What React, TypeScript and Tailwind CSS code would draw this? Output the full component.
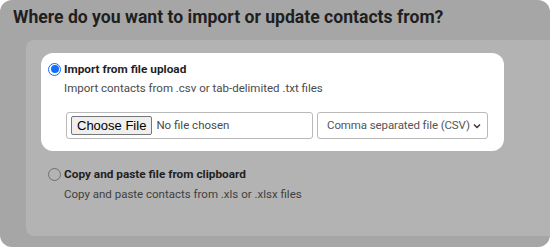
import React, { useState } from 'react';

const Radio = ({ checked }: { checked: boolean }) => (
    <span
        className={
            checked
                ? 'flex h-[13px] w-[13px] shrink-0 items-center justify-center rounded-full border-[1.5px] border-[#0f6dff] bg-white'
                : 'flex h-[13px] w-[13px] shrink-0 items-center justify-center rounded-full border border-[#6f6f6f] bg-transparent'
        }
    >
        {checked && <span className="h-[8px] w-[8px] rounded-full bg-[#0f6dff]" />}
    </span>
);

export default function App() {
    const [source, setSource] = useState<'file' | 'clipboard'>('file');

    return (
        <div className="h-[248px] w-[550px] bg-white font-['Roboto','Liberation_Sans',sans-serif]">
            <div className="flex h-[247px] w-[550px] flex-col rounded-xl bg-[#a6a6a6]">
                <h1 className="pl-[13px] pt-[5px] text-[17.6px] font-bold leading-[24px] text-[#1f1f1f]">
                    Where do you want to import or update contacts from?
                </h1>

                <div className="mt-[11px] ml-[26px] flex h-[196px] flex-col rounded-bl-lg rounded-tl-lg bg-[#b3b3b3] pl-[15px] pt-[13px]">
                    {/* Highlighted option */}
                    <div className="flex h-[98px] w-[463px] flex-col rounded-xl bg-white pl-[7px] pt-[9px]">
                        <label className="flex cursor-pointer items-center gap-[3px]" onClick={() => setSource('file')}>
                            <Radio checked={source === 'file'} />
                            <span className="text-[11.8px] font-bold leading-[14px] text-[#1f1f1f]">Import from file upload</span>
                        </label>
                        <p className="mt-[5px] pl-[16px] text-[11.5px] leading-[14px] text-[#4a4a4a]">
                            Import contacts from .csv or tab-delimited .txt files
                        </p>

                        <div className="mt-[17px] flex gap-[4px] pl-[18px]">
                            <div className="flex h-[27px] w-[247px] items-center rounded-[3px] border border-[#b9b9b9] pl-[4px]">
                                <span className="flex h-[19px] items-center rounded-[2px] border border-[#767676] bg-[#efefef] px-[5px] font-['Liberation_Sans',sans-serif] text-[13px] text-black">
                                    Choose File
                                </span>
                                <span className="ml-[4px] whitespace-nowrap text-[11.5px] text-[#4a4a4a]">No file chosen</span>
                            </div>
                            <div className="flex h-[27px] w-[171px] items-center justify-between rounded-[3px] border border-[#b9b9b9] pl-[9px] pr-[6px]">
                                <span className="whitespace-nowrap text-[11.5px] tracking-[-0.1px] text-[#555555]">Comma separated file (CSV)</span>
                                <svg width="8" height="6" viewBox="0 0 8 6" fill="none">
                                    <path d="M1 1.5 4 4.5 7 1.5" stroke="#333" strokeWidth="1.4" />
                                </svg>
                            </div>
                        </div>
                    </div>

                    {/* Second option */}
                    <div className="flex flex-col pl-[7px] pt-[16px]">
                        <label className="flex cursor-pointer items-center gap-[3px]" onClick={() => setSource('clipboard')}>
                            <Radio checked={source === 'clipboard'} />
                            <span className="text-[11.8px] font-bold leading-[14px] text-[#1f1f1f]">Copy and paste file from clipboard</span>
                        </label>
                        <p className="mt-[6px] pl-[16px] text-[11.5px] leading-[14px] text-[#3f3f3f]">
                            Copy and paste contacts from .xls or .xlsx files
                        </p>
                    </div>
                </div>
            </div>
        </div>
    );
}
